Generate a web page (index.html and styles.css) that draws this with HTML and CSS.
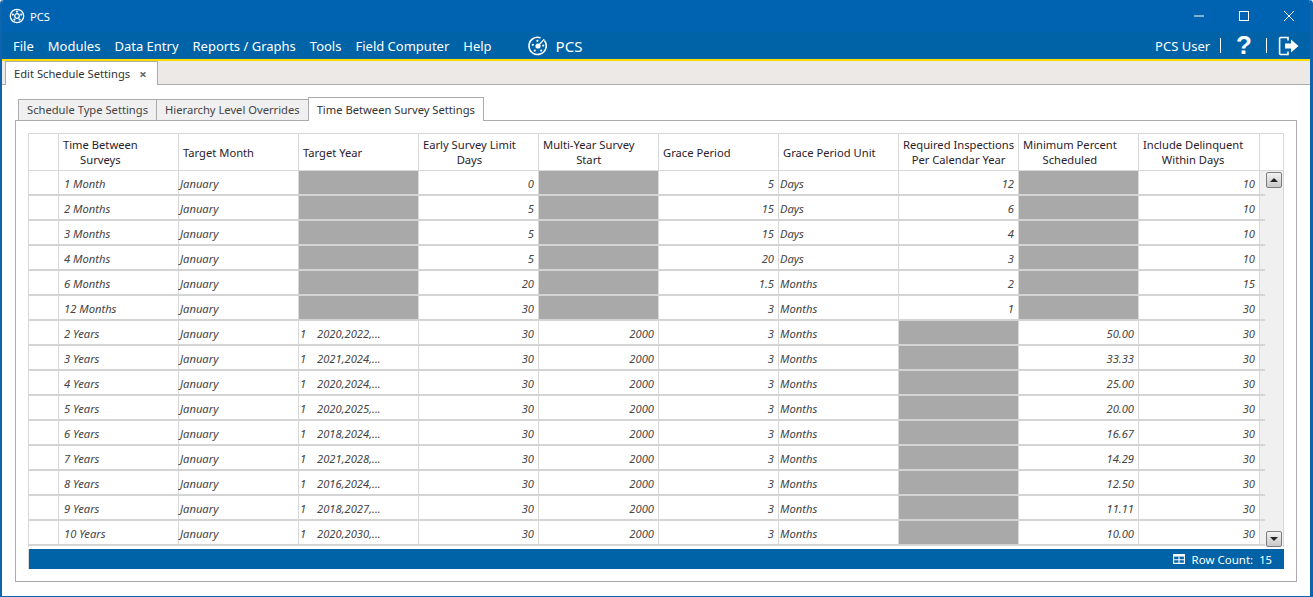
FILE: index.html
```html
<!DOCTYPE html>
<html lang="en">
<head>
<meta charset="utf-8">
<title>PCS</title>
<link rel="stylesheet" href="styles.css">
</head>
<body>
<div class="window">
  <header class="titlebar">
    <div class="title-left">
      <svg class="app-icon" viewBox="0 0 16 16"><circle cx="8" cy="8" r="6.7" fill="none" stroke="#fff" stroke-width="1.3"/><circle cx="8" cy="8" r="2.3" fill="none" stroke="#fff" stroke-width="1.3"/><circle cx="8" cy="3.6" r="1.1" fill="#fff"/><circle cx="12.2" cy="6.6" r="1.1" fill="#fff"/><circle cx="10.6" cy="11.6" r="1.1" fill="#fff"/><circle cx="5.4" cy="11.6" r="1.1" fill="#fff"/><circle cx="3.8" cy="6.6" r="1.1" fill="#fff"/></svg>
      <span class="app-name">PCS</span>
    </div>
    <div class="win-controls">
      <svg viewBox="0 0 12 12"><path d="M1 6h10" stroke="#fff" stroke-width="1"/></svg>
      <svg viewBox="0 0 12 12"><rect x="1.5" y="1.5" width="9" height="9" fill="none" stroke="#fff"/></svg>
      <svg viewBox="0 0 12 12"><path d="M1 1l10 10M11 1L1 11" stroke="#fff" stroke-width="1"/></svg>
    </div>
  </header>
  <nav class="menubar">
    <div class="menu">
      <span>File</span><span>Modules</span><span>Data Entry</span><span>Reports / Graphs</span><span>Tools</span><span>Field Computer</span><span>Help</span>
    </div>
    <div class="brand">
      <svg class="brand-icon" viewBox="0 0 20 20"><path d="M16.4 4.6A8.6 8.6 0 1 1 12.6 1.8" fill="none" stroke="#fff" stroke-width="1.6"/><path d="M10 10l6.2-6.8" stroke="#fff" stroke-width="1.2"/><circle cx="10" cy="10" r="2.6" fill="#fff"/><circle cx="9.4" cy="4.8" r="1.1" fill="#fff"/><circle cx="15.2" cy="9.6" r="1.1" fill="#fff"/><circle cx="13.2" cy="14.6" r="1.1" fill="#fff"/><circle cx="6.8" cy="14.6" r="1.1" fill="#fff"/><circle cx="4.8" cy="8.8" r="1.1" fill="#fff"/></svg>
      <span>PCS</span>
    </div>
    <div class="user">
      <span class="user-name">PCS User</span>
      <i class="sep"></i>
      <span class="help">?</span>
      <i class="sep"></i>
      <svg class="logout" viewBox="0 0 22 20"><path d="M10 4.5V1.5H2.6a1 1 0 0 0-1 1v15a1 1 0 0 0 1 1H10v-3" fill="none" stroke="#fff" stroke-width="1.6"/><path d="M7 7.5h6V3.6l7.5 6.4-7.5 6.4v-3.9H7z" fill="#fff"/></svg>
    </div>
  </nav>
  <div class="doc-strip">
    <div class="doc-tab"><span>Edit Schedule Settings</span><b class="doc-close">×</b></div>
  </div>
  <main class="content">
    <div class="tabs">
      <div class="tab">Schedule Type Settings</div>
      <div class="tab">Hierarchy Level Overrides</div>
      <div class="tab active">Time Between Survey Settings</div>
    </div>
    <section class="panel">
      <div class="grid">
        <div class="head">
          <div class="h ind"></div>
          <div class="h c two"><span>Time Between<br>Surveys</span></div>
          <div class="h c one">Target Month</div>
          <div class="h c one">Target Year</div>
          <div class="h c two"><span>Early Survey Limit<br>Days</span></div>
          <div class="h c two"><span>Multi-Year Survey<br>Start</span></div>
          <div class="h c one">Grace Period</div>
          <div class="h c one">Grace Period Unit</div>
          <div class="h c two"><span>Required Inspections<br>Per Calendar Year</span></div>
          <div class="h c two"><span>Minimum Percent<br>Scheduled</span></div>
          <div class="h c two wide"><span>Include Delinquent<br>Within Days</span></div>
          <div class="h end"></div>
        </div>
        <div class="body">
          <div class="rows">
            <div class="row"><div class="d ind"></div><div class="d c t">1 Month</div><div class="d c m">January</div><div class="d c g"></div><div class="d c n">0</div><div class="d c g"></div><div class="d c n">5</div><div class="d c m">Days</div><div class="d c n">12</div><div class="d c g"></div><div class="d c n wide">10</div></div>
            <div class="row"><div class="d ind"></div><div class="d c t">2 Months</div><div class="d c m">January</div><div class="d c g"></div><div class="d c n">5</div><div class="d c g"></div><div class="d c n">15</div><div class="d c m">Days</div><div class="d c n">6</div><div class="d c g"></div><div class="d c n wide">10</div></div>
            <div class="row"><div class="d ind"></div><div class="d c t">3 Months</div><div class="d c m">January</div><div class="d c g"></div><div class="d c n">5</div><div class="d c g"></div><div class="d c n">15</div><div class="d c m">Days</div><div class="d c n">4</div><div class="d c g"></div><div class="d c n wide">10</div></div>
            <div class="row"><div class="d ind"></div><div class="d c t">4 Months</div><div class="d c m">January</div><div class="d c g"></div><div class="d c n">5</div><div class="d c g"></div><div class="d c n">20</div><div class="d c m">Days</div><div class="d c n">3</div><div class="d c g"></div><div class="d c n wide">10</div></div>
            <div class="row"><div class="d ind"></div><div class="d c t">6 Months</div><div class="d c m">January</div><div class="d c g"></div><div class="d c n">20</div><div class="d c g"></div><div class="d c n">1.5</div><div class="d c m">Months</div><div class="d c n">2</div><div class="d c g"></div><div class="d c n wide">15</div></div>
            <div class="row"><div class="d ind"></div><div class="d c t">12 Months</div><div class="d c m">January</div><div class="d c g"></div><div class="d c n">30</div><div class="d c g"></div><div class="d c n">3</div><div class="d c m">Months</div><div class="d c n">1</div><div class="d c g"></div><div class="d c n wide">30</div></div>
            <div class="row"><div class="d ind"></div><div class="d c t">2 Years</div><div class="d c m">January</div><div class="d c y"><span class="y1">1</span>2020,2022,...</div><div class="d c n">30</div><div class="d c n">2000</div><div class="d c n">3</div><div class="d c m">Months</div><div class="d c g"></div><div class="d c n">50.00</div><div class="d c n wide">30</div></div>
            <div class="row"><div class="d ind"></div><div class="d c t">3 Years</div><div class="d c m">January</div><div class="d c y"><span class="y1">1</span>2021,2024,...</div><div class="d c n">30</div><div class="d c n">2000</div><div class="d c n">3</div><div class="d c m">Months</div><div class="d c g"></div><div class="d c n">33.33</div><div class="d c n wide">30</div></div>
            <div class="row"><div class="d ind"></div><div class="d c t">4 Years</div><div class="d c m">January</div><div class="d c y"><span class="y1">1</span>2020,2024,...</div><div class="d c n">30</div><div class="d c n">2000</div><div class="d c n">3</div><div class="d c m">Months</div><div class="d c g"></div><div class="d c n">25.00</div><div class="d c n wide">30</div></div>
            <div class="row"><div class="d ind"></div><div class="d c t">5 Years</div><div class="d c m">January</div><div class="d c y"><span class="y1">1</span>2020,2025,...</div><div class="d c n">30</div><div class="d c n">2000</div><div class="d c n">3</div><div class="d c m">Months</div><div class="d c g"></div><div class="d c n">20.00</div><div class="d c n wide">30</div></div>
            <div class="row"><div class="d ind"></div><div class="d c t">6 Years</div><div class="d c m">January</div><div class="d c y"><span class="y1">1</span>2018,2024,...</div><div class="d c n">30</div><div class="d c n">2000</div><div class="d c n">3</div><div class="d c m">Months</div><div class="d c g"></div><div class="d c n">16.67</div><div class="d c n wide">30</div></div>
            <div class="row"><div class="d ind"></div><div class="d c t">7 Years</div><div class="d c m">January</div><div class="d c y"><span class="y1">1</span>2021,2028,...</div><div class="d c n">30</div><div class="d c n">2000</div><div class="d c n">3</div><div class="d c m">Months</div><div class="d c g"></div><div class="d c n">14.29</div><div class="d c n wide">30</div></div>
            <div class="row"><div class="d ind"></div><div class="d c t">8 Years</div><div class="d c m">January</div><div class="d c y"><span class="y1">1</span>2016,2024,...</div><div class="d c n">30</div><div class="d c n">2000</div><div class="d c n">3</div><div class="d c m">Months</div><div class="d c g"></div><div class="d c n">12.50</div><div class="d c n wide">30</div></div>
            <div class="row"><div class="d ind"></div><div class="d c t">9 Years</div><div class="d c m">January</div><div class="d c y"><span class="y1">1</span>2018,2027,...</div><div class="d c n">30</div><div class="d c n">2000</div><div class="d c n">3</div><div class="d c m">Months</div><div class="d c g"></div><div class="d c n">11.11</div><div class="d c n wide">30</div></div>
            <div class="row"><div class="d ind"></div><div class="d c t">10 Years</div><div class="d c m">January</div><div class="d c y"><span class="y1">1</span>2020,2030,...</div><div class="d c n">30</div><div class="d c n">2000</div><div class="d c n">3</div><div class="d c m">Months</div><div class="d c g"></div><div class="d c n">10.00</div><div class="d c n wide">30</div></div>
          </div>
          <div class="scroll">
            <div class="sb"><svg viewBox="0 0 8 4"><path d="M4 0l4 4H0z" fill="#222"/></svg></div>
            <div class="sb"><svg viewBox="0 0 8 4"><path d="M0 0h8L4 4z" fill="#222"/></svg></div>
          </div>
        </div>
        <footer class="status">
          <svg class="grid-icon" viewBox="0 0 12 10"><path d="M.6.6h10.8v8.8H.6zM.6 5.8h10.8M6 2.4v7" fill="none" stroke="#fff" stroke-width="1.1"/><path d="M.6.6h10.8v2H.6z" fill="#fff"/></svg>
          <span class="count-label">Row Count:</span><span class="count">15</span>
        </footer>
      </div>
    </section>
  </main>
</div>
</body>
</html>
```
FILE: styles.css
```css
* { box-sizing: border-box; }
html, body { margin: 0; height: 100%; background: #e8eef4; }
body { font-family: "Noto Sans", "Open Sans", "Liberation Sans", sans-serif; font-size: 11.2px; overflow: hidden; }

.window { width: 1313px; height: 597px; display: flex; flex-direction: column; background: #fff; border: 2px solid #0e63ad; border-width: 0 3px 1px 2px; border-radius: 4px 4px 0 0; overflow: hidden; }

.titlebar { height: 32px; flex: none; background: #0063b1; color: #fff; display: flex; justify-content: space-between; align-items: center; padding-left: 7px; }
.title-left { display: flex; align-items: center; gap: 5px; }
.app-icon { width: 16px; height: 16px; }
.win-controls { display: flex; gap: 33px; padding-right: 15px; align-items: center; }
.win-controls svg { width: 12px; height: 12px; display: block; }

.menubar { height: 27px; flex: none; background: #0063a8; color: #fff; display: flex; align-items: center; font-size: 13px; padding-left: 11px; }
.menu { display: flex; gap: 14px; }
.brand { display: flex; align-items: center; gap: 8px; margin-left: 36px; font-size: 15px; }
.brand-icon { width: 20px; height: 20px; }
.user { margin-left: auto; display: flex; align-items: center; padding-right: 10px; }
.user-name { margin-right: 10px; }
.sep { width: 1px; height: 15px; background: #fff; }
.help { font-family: "Liberation Sans", sans-serif; font-weight: 700; font-size: 26px; line-height: 27px; margin: 0 14px 0 15px; }
.logout { width: 22px; height: 20px; margin-left: 11px; }

.doc-strip { height: 26px; flex: none; background: #ece9e7; border-top: 2px solid #ffdd00; border-bottom: 1px solid #ababab; padding-left: 3px; display: flex; }
.doc-tab { height: 24px; width: 153px; background: #fff; border: 1px solid #ababab; border-bottom: none; display: flex; align-items: center; padding-left: 8px; color: #333; white-space: nowrap; }
.doc-close { font-weight: 700; font-size: 13px; color: #666; margin-left: 9px; line-height: 12px; }

.content { flex: 1; padding: 12px 13px 0 13px; min-height: 0; background: #fff; }
.tabs { display: flex; height: 23px; padding-left: 3px; align-items: flex-end; position: relative; z-index: 1; }
.tab { height: 21px; padding: 0 8px; background: #f0f0f0; border: 1px solid #ababab; border-bottom: none; border-right: none; color: #444; line-height: 20px; white-space: nowrap; }
.tab.active { height: 24px; margin-bottom: -1px; background: #fff; border-right: 1px solid #ababab; color: #333; line-height: 24px; }

.panel { height: 462px; width: 1282px; border: 1px solid #ababab; padding: 12px 11px 0 12px; }
.grid { width: 1256px; }

.head { display: flex; height: 38px; border: 1px solid #d8d8d8; border-width: 1px 0 1px 1px; color: #2b1b2b; }
.h { line-height: 15px; }
.ind { width: 30px; flex: none; }
.head .ind { height: 36px; border-right: 1px solid #d8d8d8; }
.head .c { width: 120px; flex: none; height: 36px; padding-left: 4px; border-right: 1px solid #d8d8d8; white-space: nowrap; }
.head .one { line-height: 30px; padding-top: 4px; }
.head .two { padding-top: 3px; }
.head .two span { display: inline-block; text-align: center; }
.head .c.wide { width: 121px; }
.h.end { flex: 1; border-right: 1px solid #d8d8d8; height: 36px; }

.body { display: flex; height: 376px; }
.rows { width: 1237px; flex: none; border-left: 1px solid #d8d8d8; }
.row { display: flex; height: 25px; border-bottom: 2px solid #d4d4d4; font-style: italic; color: #444; background: #f0f0f0; }
.d { border-right: 1px solid #d8d8d8; line-height: 23px; padding-top: 1px; white-space: nowrap; background: #fff; }
.d.ind { width: 30px; }
.d.c { width: 120px; flex: none; }
.d.c.wide { width: 121px; }
.d.t { padding-left: 5px; }
.d.m { padding-left: 1px; }
.d.y { padding-left: 1px; }
.y1 { display: inline-block; width: 17px; }
.d.n { text-align: right; padding-right: 4px; }
.d.g { background: #a9a9a9; }

.scroll { flex: 1; background: #f0f0f0; border-right: 1px solid #d8d8d8; display: flex; flex-direction: column; justify-content: space-between; padding: 1px 1px 0 1px; }
.sb { height: 16px; width: 16px; border: 1px solid #7d7d7d; border-radius: 2px; background: linear-gradient(#f2f2f2, #c8c8c8); display: flex; align-items: center; justify-content: center; }
.sb svg { width: 8px; height: 4px; display: block; }

.status { height: 20px; margin-top: 2px; background: #0063a8; color: #fff; display: flex; align-items: center; justify-content: flex-end; padding-right: 12px; border-left: 1px solid #d8d8d8; }
.grid-icon { width: 12px; height: 10px; margin-right: 7px; }
.count-label { font-size: 11.5px; }
.count { margin-left: 6px; }
```
